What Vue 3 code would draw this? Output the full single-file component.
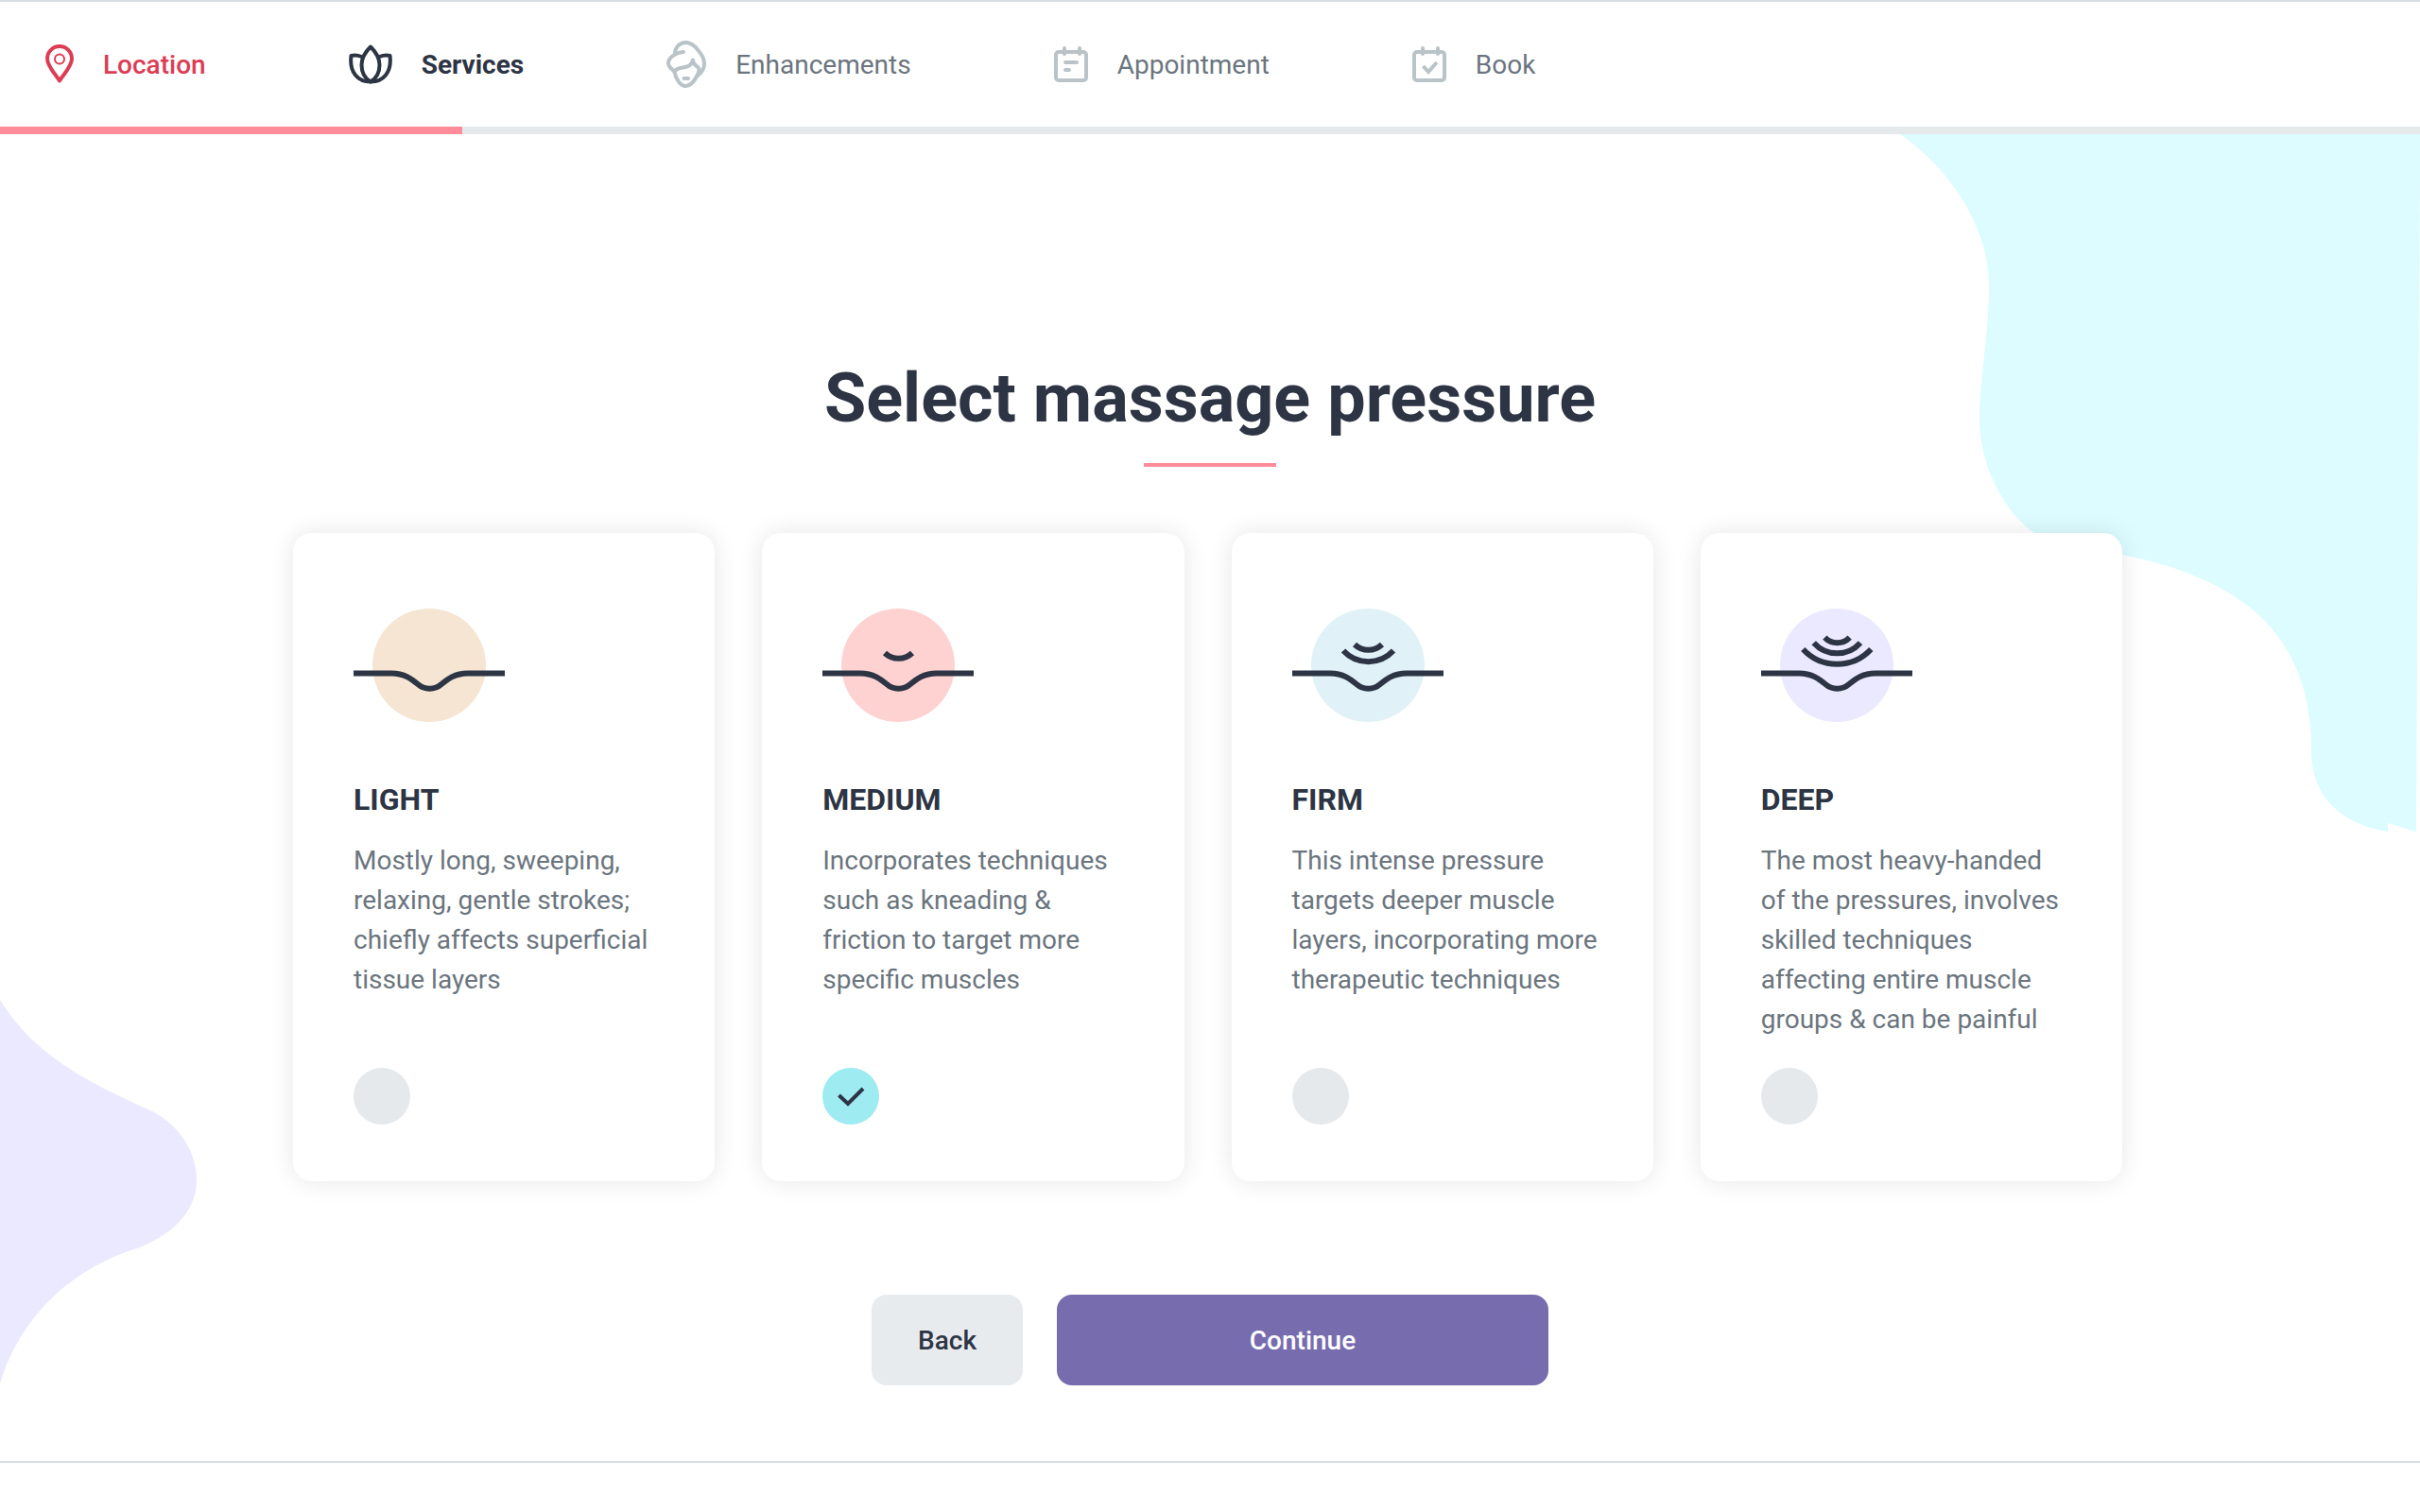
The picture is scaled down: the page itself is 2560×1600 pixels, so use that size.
<script setup>
import { ref } from 'vue'

const steps = [
  { id: 'location', label: 'Location', state: 'done', width: 30, height: 42 },
  { id: 'services', label: 'Services', state: 'current', width: 46, height: 42 },
  { id: 'enhancements', label: 'Enhancements', state: 'todo', width: 42, height: 50 },
  { id: 'appointment', label: 'Appointment', state: 'todo', width: 36, height: 38 },
  { id: 'book', label: 'Book', state: 'todo', width: 36, height: 38 },
]
const progress = 19.1

const pressures = [
  {
    id: 'light',
    name: 'LIGHT',
    text: 'Mostly long, sweeping, relaxing, gentle strokes; chiefly affects superficial tissue layers',
    tint: '#f5e5d2',
    waves: [],
  },
  {
    id: 'medium',
    name: 'MEDIUM',
    text: 'Incorporates techniques such as kneading & friction to target more specific muscles',
    tint: '#ffd2d2',
    waves: ['M66 47A21 21 0 0 0 95 47'],
  },
  {
    id: 'firm',
    name: 'FIRM',
    text: 'This intense pressure targets deeper muscle layers, incorporating more therapeutic techniques',
    tint: '#e0f1f8',
    waves: ['M66 38A21 21 0 0 0 95 38', 'M54 44.5A36 36 0 0 0 107 44.5'],
  },
  {
    id: 'deep',
    name: 'DEEP',
    text: 'The most heavy-handed of the pressures, involves skilled techniques affecting entire muscle groups & can be painful',
    tint: '#ebe9ff',
    waves: [
      'M67.3 30.7A18.4 18.4 0 0 0 93.7 30.7',
      'M55.7 36.3A33 33 0 0 0 105 36.3',
      'M44.3 43A49 49 0 0 0 116.3 43',
    ],
  },
]
const selected = ref('medium')
</script>

<template>
  <div class="page">
    <header class="header">
      <nav aria-label="Booking steps">
        <ol class="steps">
          <li v-for="step in steps" :key="step.id">
            <a href="#" class="step" :class="step.state">
              <svg :width="step.width" :height="step.height" :viewBox="`0 0 ${step.width} ${step.height}`" class="step-icon" aria-hidden="true">
                <g v-if="step.id === 'location'">
                  <path d="M15 38.5C11 31.5 2 23.5 2 15A13 13 0 0 1 28 15C28 23.5 19 31.5 15 38.5Z" />
                  <circle cx="15" cy="15.5" r="5" stroke-width="2" />
                </g>
                <g v-else-if="step.id === 'services'">
                  <path d="M23 2.5C17.5 8 13.5 14 13.5 21.5C13.5 29.5 17 36 23 39.5C29 36 32.5 29.5 32.5 21.5C32.5 14 28.5 8 23 2.5Z" />
                  <path d="M13.5 13C10 11.5 6 11 2.5 12C1.5 20 2.5 27 7 32.5C11 37.5 17 39.5 23 39.5C29 39.5 35 37.5 39 32.5C43.5 27 44.5 20 43.5 12C40 11 36 11.5 32.5 13" />
                </g>
                <g v-else-if="step.id === 'enhancements'">
                  <path d="M9 14C9 7 14 2 20.5 2C25 2 29 4.5 33 9.5C37 14 40 19 40 24.5C40 30 37 34 33 37" />
                  <path d="M18 12C12 12 2 17 2 24C2 28 6 30 8.5 33C10 40 14 48 20.5 48C27 48 31 40 33 36C34 33 35.5 31 34 29C32 26 28 26 28 20.5C27 25 25 27 20 28C15 29 10 29 8.5 33" />
                  <path d="M18.5 40H23" />
                </g>
                <g v-else>
                  <rect x="2" y="6" width="32" height="30" rx="3" />
                  <path d="M11 2V8M27 2V8" />
                  <path v-if="step.id === 'appointment'" d="M12 17H24M12 25H16" />
                  <path v-else d="M11.5 21L17 27L26 17" class="square" />
                </g>
              </svg>
              <span>{{ step.label }}</span>
            </a>
          </li>
        </ol>
      </nav>
      <div class="track" role="progressbar" aria-label="Booking progress" :aria-valuenow="progress">
        <div class="bar" :style="{ width: progress + '%' }"></div>
      </div>
    </header>

    <main class="main">
      <svg class="blob blob-right" width="560" height="740" viewBox="0 0 560 740" aria-hidden="true">
        <path d="M10 0C60 34 104 96 104 160C104 214 94 258 94 302C94 350 120 400 152 422C180 440 220 440 245 445C370 470 445 528 445 650C444 700 475 730 526 738V729L556 738L560 40V0Z" />
      </svg>
      <svg class="blob blob-left" width="208" height="407" viewBox="0 0 208 407" aria-hidden="true">
        <path d="M0 0C36 58 90 86 157 116C188 130 208 160 208 190C208 222 186 246 148 262C80 282 22 332 0 407Z" />
      </svg>

      <form class="form" @submit.prevent>
        <h1 class="title">Select massage pressure</h1>
        <div class="cards">
          <label v-for="p in pressures" :key="p.id" class="card" :for="p.id">
            <svg class="picture" width="160" height="120" viewBox="0 0 160 120" aria-hidden="true">
              <circle cx="80" cy="60" r="60" :fill="p.tint" />
              <path d="M0 68.5H40C54 68.5 62 75 68 80C72 83.5 76 84.7 80.5 84.7C85 84.7 89 83.5 93 80C99 75 107 68.5 121 68.5H160" />
              <path v-for="wave in p.waves" :key="wave" :d="wave" />
            </svg>
            <span class="name">{{ p.name }}</span>
            <span class="text">{{ p.text }}</span>
            <span class="choice">
              <input :id="p.id" v-model="selected" type="radio" name="pressure" :value="p.id" />
              <svg v-if="selected === p.id" width="60" height="60" viewBox="0 0 60 60" aria-hidden="true">
                <path d="M17.5 29L27 38L43 22" />
              </svg>
            </span>
          </label>
        </div>
        <div class="actions">
          <button type="button" class="button back">Back</button>
          <button type="submit" class="button continue">Continue</button>
        </div>
      </form>
    </main>
    <footer class="footer"></footer>
  </div>
</template>

<style>
body {
  margin: 0;
  background: #fff;
}
</style>

<style scoped>
.page {
  font-family: Roboto, "Liberation Sans", sans-serif;
  font-size: 28px;
  color: #2d3544;
}
.header {
  border-top: 2px solid #d8dee1;
}
.steps {
  display: flex;
  gap: 151px;
  height: 132px;
  margin: 0;
  padding: 0 48px;
  list-style: none;
  align-items: center;
}
.step {
  display: flex;
  align-items: center;
  gap: 31px;
  color: #6b757e;
  text-decoration: none;
}
.step-icon {
  fill: none;
  stroke: #b9c3c8;
  stroke-width: 4;
  stroke-linecap: round;
  stroke-linejoin: round;
}
.square {
  stroke-linecap: butt;
  stroke-linejoin: miter;
}
.done {
  color: #dc3d55;
  font-weight: 500;
}
.current {
  color: #2d3544;
  font-weight: 700;
}
.done .step-icon,
.current .step-icon {
  stroke: currentColor;
}
.track {
  height: 8px;
  background: #e5e9ec;
}
.bar {
  height: 100%;
  background: #ff8c9b;
}
.main {
  position: relative;
}
.blob {
  position: absolute;
}
.blob-right {
  top: 0;
  right: 0;
  fill: #dcfcff;
}
.blob-left {
  top: 916px;
  left: 0;
  fill: #ebe9ff;
}
.form {
  position: relative;
  display: flex;
  flex-direction: column;
  align-items: center;
  padding: 238px 0 80px;
}
.title {
  display: flex;
  flex-direction: column;
  align-items: center;
  gap: 26px;
  margin: 0 0 70px;
  font-size: 72px;
  line-height: 84px;
  font-weight: 700;
}
.title::after {
  content: "";
  width: 140px;
  height: 4px;
  background: #ff8c9b;
}
.cards {
  display: grid;
  grid-template-columns: repeat(4, 1fr);
  gap: 50px;
  align-self: stretch;
  padding: 0 315px 0 310px;
}
.card {
  display: flex;
  flex-direction: column;
  padding: 80px 54px 60px 64px;
  border-radius: 20px;
  background: #fff;
  box-shadow: 0 0 26px rgba(0, 0, 0, 0.1);
}
.picture {
  margin-bottom: 62px;
}
.picture path {
  fill: none;
  stroke: #2d3544;
  stroke-width: 6;
}
.name {
  margin-bottom: 24px;
  font-size: 32px;
  line-height: 40px;
  font-weight: 700;
}
.text {
  margin-bottom: 30px;
  line-height: 42px;
  color: #6b757e;
}
.choice {
  display: grid;
  width: 60px;
  height: 60px;
  margin-top: auto;
}
.choice > * {
  grid-area: 1 / 1;
}
.choice input {
  appearance: none;
  width: 60px;
  height: 60px;
  margin: 0;
  border-radius: 50%;
  background: #e5e9ec;
}
.choice input:checked {
  background: #9eebf2;
}
.choice svg {
  z-index: 1;
  fill: none;
  stroke: #2d3544;
  stroke-width: 4;
  pointer-events: none;
}
.actions {
  display: flex;
  gap: 36px;
  margin-top: 120px;
}
.button {
  height: 96px;
  border: 0;
  border-radius: 16px;
  font: inherit;
  font-weight: 500;
}
.back {
  width: 160px;
  background: #e7ebee;
  color: #2d3544;
}
.continue {
  width: 520px;
  background: #776cae;
  color: #fff;
}
.footer {
  height: 52px;
  border-top: 2px solid #d8dee1;
}
</style>
